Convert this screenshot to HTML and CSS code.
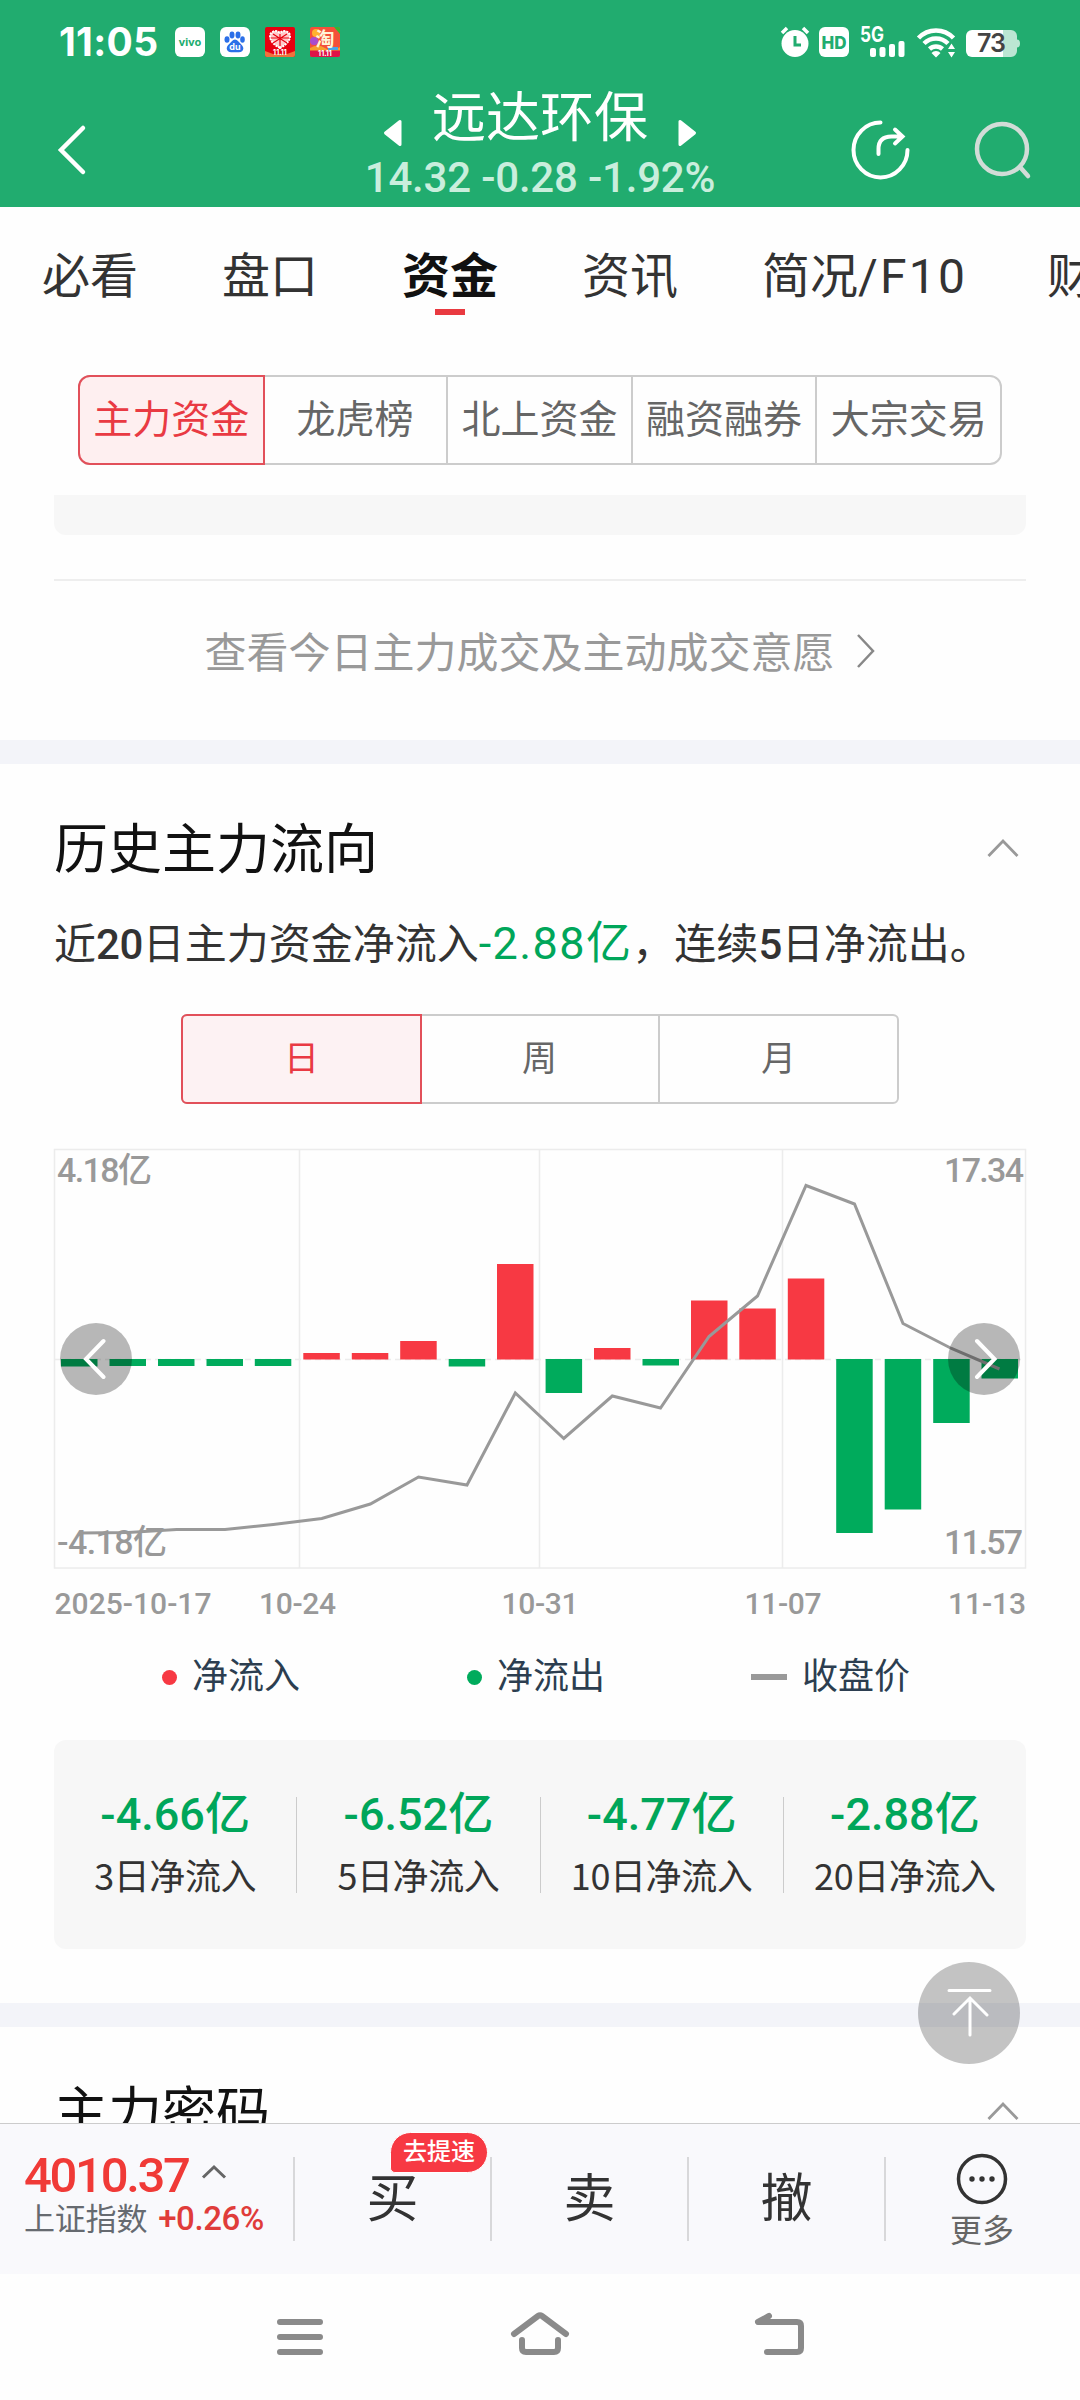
FILE: index.html
```html
<!DOCTYPE html>
<html lang="zh-CN">
<head>
<meta charset="utf-8">
<title>远达环保</title>
<link rel="stylesheet" href="styles.css">
</head>
<body>
<div class="screen">
  <header class="top">
    <div class="status">
      <span class="clock">11:05</span>
      <div class="apps">
        <span class="app vivo">vivo</span>
        <span class="app baidu">
          <svg width="30" height="30" viewBox="0 0 30 30"><g fill="#2b6fe8"><ellipse cx="7" cy="12.500" rx="2.500" ry="3.200"/><ellipse cx="12" cy="8" rx="2.500" ry="3.400"/><ellipse cx="18" cy="8" rx="2.500" ry="3.400"/><ellipse cx="22.500" cy="12.500" rx="2.300" ry="3.200"/><path d="M15 12.500c2.600 0 3.500 2.400 5.600 4.300 2.500 2.300 3.300 4.200 2.400 6.200-1.200 2.600-4.500 2.300-8 2.300s-6.600.3-7.900-2.300c-1-2 .1-4.200 2.400-6.200 2.100-1.900 2.900-4.300 5.500-4.300z"/></g><text x="15" y="23" text-anchor="middle" class="du">du</text></svg>
        </span>
        <span class="app jd">
          <svg width="30" height="30" viewBox="0 0 30 30"><rect width="30" height="30" rx="2" fill="#e8000f"/><path d="M0 24l8 3h14l8-3v4a2 2 0 0 1-2 2H2a2 2 0 0 1-2-2z" fill="#f0713d"/><path d="M15 21C8 17.500 5 13 5 9c0-4 6-7 10-3 4-4 10-1 10 3 0 4-3 8.500-10 12z" fill="#ffc9c9" stroke="#fff" stroke-width="2" stroke-dasharray="2 1"/><path d="M8 7l14 9M22 7L8 16M15 7v12M6 11h18" stroke="#e8000f" stroke-width="1.200"/><text x="15" y="28" text-anchor="middle" class="sale">11.11</text></svg>
        </span>
        <span class="app taobao">
          <svg width="30" height="30" viewBox="0 0 30 30"><rect width="30" height="30" rx="2" fill="#f4503a"/><path d="M24 0h4a2 2 0 0 1 2 2v5z" fill="#35b533"/><circle cx="4" cy="14" r="4" fill="#a94cd0"/><circle cx="6" cy="6" r="4" fill="#ffb22e"/><path d="M0 21q8-5 15 0t15-1v6H0z" fill="#f7a02d"/><path d="M18 20h10v3H18z" fill="#4aa5e8"/><path d="M0 23.500h30V28a2 2 0 0 1-2 2H2a2 2 0 0 1-2-2z" fill="#df1248"/><text x="15" y="19" text-anchor="middle" class="tao">淘</text><text x="15" y="29" text-anchor="middle" class="sale">11.11</text></svg>
        </span>
      </div>
      <svg class="sys" width="242" height="34" viewBox="0 0 242 34">
        <g fill="#fff">
          <circle cx="15" cy="18.500" r="13.500"/>
          <path d="M2 8l5-5M28 8l-5-5" stroke="#fff" stroke-width="3.500"/>
          <path d="M15 11v9h6" stroke="#21ac6f" stroke-width="3" fill="none"/>
          <rect x="39" y="2" width="30" height="30" rx="6"/>
          <text x="54" y="24" text-anchor="middle" class="hd">HD</text>
          <text x="80" y="17" class="fiveg" textLength="24" lengthAdjust="spacingAndGlyphs">5G</text>
          <rect x="90" y="23" width="6" height="9" rx="2"/><rect x="99.500" y="22" width="6" height="10" rx="2"/><rect x="109" y="19" width="6" height="13" rx="2"/><rect x="118.500" y="16" width="6" height="16" rx="2"/>
          <path d="M138.500 13a24 24 0 0 1 35 0" fill="none" stroke="#fff" stroke-width="4.500"/>
          <path d="M144 18.500a17 17 0 0 1 24 0" fill="none" stroke="#fff" stroke-width="4.500"/>
          <path d="M149.500 24a9.500 9.500 0 0 1 13 0" fill="none" stroke="#fff" stroke-width="4.500"/>
          <path d="M156 32.500l-4.500-4.500a6 6 0 0 1 9 0zM168 24l3.500-5.500 3.500 5.500zM168 27l3.500 5.500 3.500-5.500z"/>
          <path d="M192 5h31v27h-31a6 6 0 0 1-6-6V11a6 6 0 0 1 6-6z"/>
          <path d="M223 5h8a6 6 0 0 1 6 6v3.500q3 0 3 4t-3 4V26a6 6 0 0 1-6 6h-8z" fill="#bbe6d3"/>
          <text x="211" y="27" text-anchor="middle" class="batt">73</text>
        </g>
      </svg>
    </div>
    <div class="nav">
      <svg class="back" width="32" height="54" viewBox="0 0 32 54"><path d="M28 5L6 27l22 22" fill="none" stroke="#fff" stroke-width="4.500" stroke-linecap="round"/></svg>
      <div class="title">
        <div class="name">
          <svg width="20" height="28" viewBox="0 0 20 28"><path d="M17 2.500v23L2.500 14z" fill="#fff" stroke="#fff" stroke-width="3" stroke-linejoin="round"/></svg>
          <h1>远达环保</h1>
          <svg width="20" height="28" viewBox="0 0 20 28"><path d="M3 2.500v23L17.500 14z" fill="#fff" stroke="#fff" stroke-width="3" stroke-linejoin="round"/></svg>
        </div>
        <div class="price">14.32 -0.28 -1.92%</div>
      </div>
      <div class="tools">
        <svg width="60" height="60" viewBox="0 0 60 60" fill="none" stroke="#fff" stroke-width="4" stroke-linecap="round"><path d="M30.500 2.500A27 27.500 0 1 0 57.500 30"/><path d="M28.500 34v-5q0-12.500 13-12.500h9M45 9.500l7.500 7-7.500 7"/></svg>
        <svg width="60" height="60" viewBox="0 0 60 60" fill="none" stroke="#d2dcd7" stroke-width="4.500" stroke-linecap="round"><circle cx="29" cy="29" r="25"/><path d="M47 47l8 9"/></svg>
      </div>
    </div>
  </header>

  <nav class="tabs">
    <span>必看</span><span>盘口</span><span class="on">资金</span><span>资讯</span><span class="f10">简况<i>/F10</i></span><span>财</span>
  </nav>

  <main class="content">
    <div class="seg five"><span class="on">主力资金</span><span>龙虎榜</span><span>北上资金</span><span>融资融券</span><span>大宗交易</span></div>
    <div class="stub"></div>
    <div class="more-link">查看今日主力成交及主动成交意愿<svg width="20" height="36" viewBox="0 0 20 36"><path d="M2 2l15 16L2 34" fill="none" stroke="#888" stroke-width="2.500"/></svg></div>
    <div class="band"></div>

    <section class="block">
      <div class="head"><h2>历史主力流向</h2><svg width="32" height="20" viewBox="0 0 32 20"><path d="M1.500 18L16 3l14.500 15" fill="none" stroke="#999" stroke-width="2.800"/></svg></div>
      <p class="sum">近<b>20</b>日主力资金净流入<em>-2.88亿</em>，连续<b>5</b>日净流出。</p>
      <div class="seg three"><span class="on">日</span><span>周</span><span>月</span></div>

      <svg class="chart" width="974" height="484" viewBox="53 1148 974 484">
        <g fill="none" stroke="#ececec" stroke-width="1.500">
          <rect x="54.500" y="1149.500" width="971" height="418.500"/>
          <path d="M299.500 1149v419M539.500 1149v419M782.500 1149v419"/>
          <path d="M55 1359.500h970" stroke-dasharray="6 4"/>
        </g>
        <g class="axis">
          <text x="57" y="1182" textLength="95">4.18亿</text>
          <text x="57" y="1554" textLength="110">-4.18亿</text>
          <text x="944" y="1182" textLength="80">17.34</text>
          <text x="944" y="1554" textLength="79">11.57</text>
        </g>
        <g fill="#00ab5c">
          <path d="M61 1359h36.500v7.500H61zM109.500 1359h36.500v7h-36.500zM158 1359h36.500v7H158zM206.500 1359h36.500v7h-36.500zM254.800 1359h36.500v7h-36.500zM448.700 1359h36.500v7.500h-36.500zM545.600 1359h36.500v34h-36.500zM642.500 1359h36.500v6.500h-36.500zM836.200 1359h36.500v174h-36.500zM884.700 1359h36.500v150.500h-36.500zM933.200 1359h36.500v64h-36.500zM981.500 1359h36.500v19.500h-36.500z"/>
        </g>
        <g fill="#f73943">
          <path d="M303.300 1353h36.500v6.500h-36.500zM351.800 1353h36.500v6.500h-36.500zM400.200 1341h36.500v18.500h-36.500zM497 1264h36.500v95.500H497zM594 1348h36.500v11.500H594zM691 1300.500h36.500v59H691zM739.300 1308.500h36.500v51h-36.500zM787.800 1278.500h36.500v81h-36.500z"/>
        </g>
        <path fill="none" stroke="#999" stroke-width="3" d="M79.500 1533L128 1532.500 176.500 1529.500 225 1529.500 273.300 1524.500 321.800 1518.500 370.300 1504 418.500 1477 467 1485 515.300 1393 563.800 1438.500 612.300 1396 660.500 1408 709 1336.500 757.500 1296 806 1185.500 854.500 1204 903 1323.500 951.500 1348.500 999.500 1369"/>
        <g fill="#000" fill-opacity=".28"><circle cx="96" cy="1359" r="36"/><circle cx="984" cy="1359" r="36"/></g>
        <g fill="none" stroke="#fff" stroke-width="4" stroke-linecap="round"><path d="M103.500 1341L86 1359l17.500 18M977 1341l17.500 18-17.500 18"/></g>
        <g class="dates">
          <text x="54.500" y="1614" textLength="157">2025-10-17</text>
          <text x="259" y="1614" textLength="77">10-24</text>
          <text x="501.500" y="1614" textLength="77">10-31</text>
          <text x="744.500" y="1614" textLength="77">11-07</text>
          <text x="948" y="1614" textLength="78">11-13</text>
        </g>
      </svg>

      <div class="legend">
        <span><i class="dot red"></i>净流入</span><span><i class="dot green"></i>净流出</span><span><i class="dash"></i>收盘价</span>
      </div>

      <div class="stats">
        <div><strong>-4.66亿</strong><small>3日净流入</small></div>
        <div><strong>-6.52亿</strong><small>5日净流入</small></div>
        <div><strong>-4.77亿</strong><small>10日净流入</small></div>
        <div><strong>-2.88亿</strong><small>20日净流入</small></div>
      </div>
    </section>
    <div class="band"></div>
    <section class="block">
      <div class="head"><h2>主力密码</h2><svg width="32" height="20" viewBox="0 0 32 20"><path d="M1.500 18L16 3l14.500 15" fill="none" stroke="#999" stroke-width="2.800"/></svg></div>
    </section>
  </main>

  <svg class="to-top" width="102" height="102" viewBox="0 0 102 102"><circle cx="51" cy="51" r="51" fill="#000" fill-opacity=".23"/><path d="M31 28.500h41M52 37v36M36 52l16-16 17 17" fill="none" stroke="#fff" stroke-width="3" stroke-linecap="round"/></svg>

  <div class="trade">
    <div class="index">
      <div class="pts">4010.37<svg width="26" height="16" viewBox="0 0 26 16"><path d="M2 13.500L13 3l11 10.500" fill="none" stroke="#666" stroke-width="3"/></svg></div>
      <div class="chg">上证指数<b>+0.26%</b></div>
    </div>
    <div class="act">买<span class="badge">去提速</span></div>
    <div class="act">卖</div>
    <div class="act">撤</div>
    <div class="act etc">
      <svg width="52" height="52" viewBox="0 0 52 52"><circle cx="26" cy="26" r="23.500" fill="none" stroke="#333" stroke-width="3.500"/><g fill="#333"><circle cx="16" cy="26" r="2.700"/><circle cx="26" cy="26" r="2.700"/><circle cx="36" cy="26" r="2.700"/></g></svg>
      <span>更多</span>
    </div>
  </div>

  <div class="keys">
    <svg width="60" height="50" viewBox="0 0 60 50"><path d="M10 10h40M10 25h40M10 40h40"/></svg>
    <svg width="60" height="50" viewBox="0 0 60 50"><path d="M4 22L28 4q2-1.500 4 0l24 18M12 28v8q0 4 4 4h28q4 0 4-4v-8"/></svg>
    <svg width="60" height="50" viewBox="0 0 60 50"><path d="M19 4L8 10h39q4 0 4 4v22q0 4-4 4H17"/></svg>
  </div>
</div>
</body>
</html>
```
FILE: styles.css
```css
* { box-sizing: border-box; margin: 0; padding: 0; }
body {
  background: #fefefe;
  font-family: Roboto, "Noto Sans CJK SC", sans-serif;
  color: #333;
}
b, em, i { font-style: normal; font-weight: 500; }
svg { display: block; flex: none; overflow: visible; }
.screen {
  position: relative;
  display: flex;
  flex-direction: column;
  width: 1080px;
  height: 2400px;
  overflow: hidden;
}

/* header */
.top { flex: none; height: 207px; background: #21ac6f; color: #fff; }
.status { display: flex; align-items: center; height: 84px; padding: 0 58px 0 59px; }
.clock { width: 116px; font: 700 39px/40px Inter, sans-serif; letter-spacing: .3px; }
.apps { display: flex; gap: 15px; flex: 1; }
.app { width: 30px; height: 30px; border-radius: 6px; background: #fff; }
.jd, .taobao { background: none; }
.vivo { font: 700 11px/29px "Open Sans", sans-serif; color: #21ac6f; text-align: center; }
.du { font: 700 9px Inter, sans-serif; fill: #fff; }
.sale { font: 700 7px Inter, sans-serif; fill: #fff; }
.tao { font: 700 19px "Noto Sans CJK SC", sans-serif; fill: #fff5d8; }
.hd { font: 800 17px Inter, sans-serif; fill: #21ac6f; }
.fiveg { font: 700 21px Inter, sans-serif; }
.batt { font: 600 25px Inter, sans-serif; fill: #444; letter-spacing: -1px; }

.nav { display: flex; align-items: flex-start; height: 123px; padding: 0 47px 0 55px; }
.back { margin-top: 39px; }
.title { width: 500px; margin: 0 0 0 203px; }
.name { display: flex; align-items: flex-start; justify-content: center; gap: 29px; height: 67px; }
.name svg { margin-top: 35px; }
.name h1 { font-size: 54px; line-height: 70px; font-weight: 400; }
.price {
  margin-top: 7px; line-height: 40px; font-size: 42px; text-align: center;
  color: #c9eedd; font-weight: 500; letter-spacing: -.2px;
}
.tools { display: flex; gap: 63px; margin: 36px 0 0 auto; }

.tabs { display: flex; flex: none; height: 143px; padding-left: 42px; gap: 84px; overflow: hidden; }
.tabs span { flex: none; position: relative; font-size: 48px; line-height: 139px; }
.tabs .f10 { width: 201px; white-space: nowrap; }
.tabs .f10 i { font-weight: 400; letter-spacing: 2.200px; }
.tabs .on { color: #111; font-weight: 700; }
.tabs .on::after {
  content: ""; position: absolute; left: 33px; top: 102px;
  width: 30px; height: 6px; background: #e93a40;
}

/* content */
.content { flex: 1; min-height: 0; overflow: hidden; padding-top: 25px; }
.seg { display: flex; margin: 0 auto; height: 90px; border: 2px solid #ccc; color: #666; }
.seg span { flex: 1; text-align: center; line-height: 86px; border-left: 2px solid #ccc; }
.seg .on {
  margin: -2px -1px -2px -2px; border: 2px solid #e2505a; line-height: 86px;
  background: #feeff0; color: #e93a43;
}
.seg span:nth-child(2) { border-left: 0; }
.five { width: 924px; border-radius: 12px; font-size: 39px; }
.five .on { border-radius: 12px 0 0 12px; }
.three { width: 718px; border-radius: 6px; font-size: 35px; }
.three span, .three .on { line-height: 88px; }
.three .on { border-radius: 6px 0 0 6px; background: #fdf2f3; }
.stub { height: 40px; margin: 30px 54px 0; background: #f7f7f7; border-radius: 0 0 12px 12px; }
.more-link {
  display: flex; justify-content: center; align-items: center; gap: 21px;
  margin: 44px 54px 0; height: 161px; padding-bottom: 22px;
  border-top: 2px solid #eee; font-size: 42px; color: #999;
}
.more-link svg { margin-top: 3px; }
.band { height: 24px; background: #f3f4f9; }
.block { padding: 0 54px; }
.head { display: flex; justify-content: space-between; align-items: center; height: 171px; padding-right: 7px; }
.head h2 { font-size: 54px; font-weight: 400; color: #111; padding-bottom: 8px; }
.head svg { margin-top: -3px; }
.sum { height: 100px; line-height: 60px; margin-top: -21px; font-size: 42px; white-space: nowrap; }
.sum em { font-size: 45px; font-weight: 400; color: #00a65a; letter-spacing: 1.400px; }
.sum b { font-weight: 500; letter-spacing: -.500px; }
.chart { margin: 44px -1px 0; }
.axis { font-size: 34px; font-weight: 500; fill: #999; }
.dates { font-size: 30px; font-weight: 500; fill: #999; }
.legend { display: flex; height: 108px; padding-left: 108px; color: #2c3e50; font-size: 36px; line-height: 60px; }
.legend span { display: flex; flex: none; align-items: center; width: 305px; height: 90px; }
.dot { width: 15px; height: 15px; border-radius: 50%; margin-right: 15px; }
.red { background: #f73943; }
.green { background: #00ab5c; }
.dash { width: 36px; height: 6px; margin-right: 15px; background: #999; }
.legend span:last-child { margin-left: -21px; width: 180px; }
.stats { display: flex; height: 209px; background: #f7f7f7; border-radius: 12px; margin-bottom: 54px; }
.stats div { flex: 1; height: 96px; margin-top: 57px; text-align: center; border-left: 1px solid #ccc; }
.stats div:first-child { border-left: 0; }
.stats strong { display: block; font-size: 45px; line-height: 36px; font-weight: 500; color: #00a65a; }
.stats small { display: block; margin-top: 19px; font: 400 36px/44px "Noto Sans CJK SC", sans-serif; letter-spacing: -.400px; }

.to-top { position: absolute; left: 918px; top: 1962px; }

/* trade bar */
.trade {
  display: flex; align-items: flex-start; flex: none; height: 151px; padding-top: 33px;
  background: #f9f9fc; border-top: 1px solid #ccc;
}
.index { flex: none; width: 293px; padding-left: 24px; color: #f03a37; }
.pts { display: flex; align-items: center; font-size: 49px; line-height: 37px; font-weight: 500; letter-spacing: -2.300px; }
.pts svg { margin: -8px 0 0 12px; }
.chg { margin-top: 4px; font-size: 31px; line-height: 42px; color: #666a70; white-space: nowrap; letter-spacing: -.200px; }
.chg b { margin-left: 11px; font-size: 33px; color: #e03c3a; letter-spacing: -.400px; }
.act {
  position: relative; flex: none; width: 197px; height: 84px; text-align: center;
  border-left: 2px solid #d8d8da; font-size: 52px; line-height: 86px;
}
.badge {
  position: absolute; left: 95px; top: -25px; width: 98px; height: 41px;
  border: 1px solid #fff; border-radius: 21px 21px 21px 5px; background: #f73943;
  color: #fff; font-size: 24px; font-weight: 500; line-height: 38px;
}
.etc { display: flex; flex-direction: column; align-items: center; width: 194px; }
.etc svg { margin-top: -4px; }
.etc span { margin-top: 2px; font-size: 32px; line-height: 48px; color: #666; }

.keys { display: flex; flex: none; justify-content: center; gap: 180px; height: 126px; padding-top: 38px; }
.keys svg { fill: none; stroke: #8a8a8a; stroke-width: 6; stroke-linecap: round; stroke-linejoin: round; }
```
